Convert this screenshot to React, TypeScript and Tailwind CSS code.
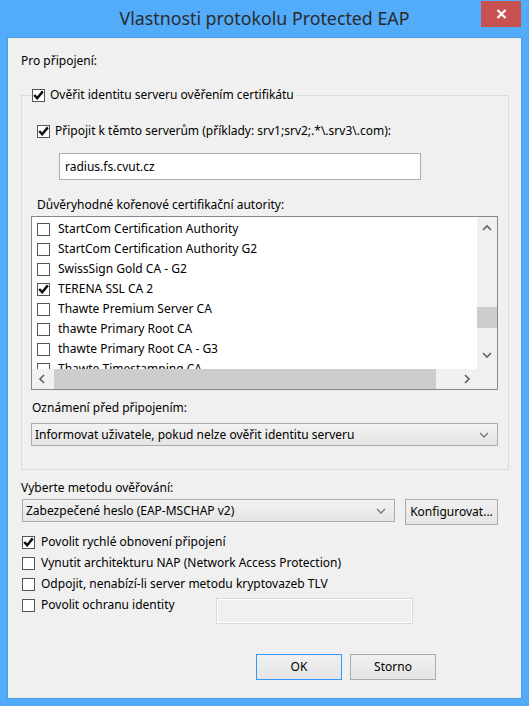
import React from "react";

const Check = () => (
  <svg width="11" height="10" viewBox="0 0 11 10" className="block">
    <path d="M1.2 5 L4.2 8.2 L9.8 1.4" fill="none" stroke="#111" strokeWidth="2.5" />
  </svg>
);

const CheckBox = ({ checked }: { checked?: boolean }) => (
  <span className="flex h-[13px] w-[13px] shrink-0 items-center justify-center border border-[#555] bg-white">
    {checked && <Check />}
  </span>
);

const Chevron = ({ dir }: { dir: "up" | "down" | "left" | "right" }) => {
  const d = {
    up: "M1 6 L5 2 L9 6",
    down: "M1 2 L5 6 L9 2",
    left: "M6 1 L2 5 L6 9",
    right: "M2 1 L6 5 L2 9",
  }[dir];
  const horiz = dir === "left" || dir === "right";
  return (
    <svg width={horiz ? 8 : 10} height={horiz ? 10 : 8} viewBox={horiz ? "0 0 8 10" : "0 0 10 8"}>
      <path d={d} fill="none" stroke="#606060" strokeWidth="1.6" />
    </svg>
  );
};

const certs = [
  { name: "StartCom Certification Authority" },
  { name: "StartCom Certification Authority G2" },
  { name: "SwissSign Gold CA - G2" },
  { name: "TERENA SSL CA 2", checked: true },
  { name: "Thawte Premium Server CA" },
  { name: "thawte Primary Root CA" },
  { name: "thawte Primary Root CA - G3" },
  { name: "Thawte Timestamping CA" },
];

const Combo = ({ text, className }: { text: string; className: string }) => (
  <div
    className={`flex h-[23px] items-center justify-between border border-[#acacac] bg-gradient-to-b from-[#f2f2f2] to-[#e5e5e5] pl-[3px] pr-[8px] ${className}`}
  >
    <span>{text}</span>
    <svg width="10" height="6" viewBox="0 0 10 6">
      <path d="M1 1 L5 5 L9 1" fill="none" stroke="#7a7a7a" strokeWidth="1.4" />
    </svg>
  </div>
);

const Button = ({ label, primary, className }: { label: string; primary?: boolean; className: string }) => (
  <div
    className={`flex items-center justify-center border bg-gradient-to-b from-[#f0f0f0] to-[#e5e5e5] ${
      primary ? "border-[#3399ff]" : "border-[#acacac]"
    } ${className}`}
  >
    {label}
  </div>
);

const Option = ({ label, checked }: { label: string; checked?: boolean }) => (
  <div className="flex h-[16px] items-center gap-[6px]">
    <CheckBox checked={checked} />
    <span>{label}</span>
  </div>
);

export default function App() {
  return (
    <div className="flex h-[706px] w-[529px] flex-col bg-[#52acfa] font-['Noto_Sans',sans-serif] text-[12px] leading-[16px] text-black">
      <div className="grid h-[37px] grid-cols-[1fr_auto_1fr]">
        <div />
        <div className="flex items-center pb-[1px] text-[17.8px] text-[#2b2b2b]">Vlastnosti protokolu Protected EAP</div>
        <div className="flex justify-end">
          <div className="mr-[8px] mt-[1px] flex h-[26px] w-[40px] items-center justify-center bg-[#c75050]">
            <svg width="11" height="10" viewBox="0 0 11 10">
              <path d="M1.5 1 L9.5 9 M9.5 1 L1.5 9" stroke="white" strokeWidth="2.2" />
            </svg>
          </div>
        </div>
      </div>

      <div className="mx-[7px] flex h-[662px] flex-col border border-[#4a9ee8] bg-[#f0f0f0]">
        <div className="ml-[13px] mt-[15px]">Pro připojení:</div>

        <fieldset className="ml-[13px] mt-[18px] w-[488px] border border-[#dcdcdc] pb-[23px]">
          <legend className="ml-[10px] pr-[2px]">
            <div className="flex h-[16px] items-center gap-[5px]">
              <CheckBox checked />
              <span>Ověřit identitu serveru ověřením certifikátu</span>
            </div>
          </legend>

          <div className="ml-[15px] mt-[20px] flex h-[16px] items-center gap-[5px]">
            <CheckBox checked />
            <span>Připojit k těmto serverům (příklady: srv1;srv2;.*\.srv3\.com):</span>
          </div>

          <div className="ml-[37px] mt-[14px] flex h-[27px] w-[362px] items-center border border-[#adadad] bg-white pl-[5px]">
            radius.fs.cvut.cz
          </div>

          <div className="ml-[15px] mt-[17px]">Důvěryhodné kořenové certifikační autority:</div>

          <div className="ml-[9px] mt-[3px] grid h-[174px] w-[467px] grid-cols-[1fr_20px] grid-rows-[1fr_20px] border border-[#828790] bg-white">
            <div className="overflow-hidden pl-[5px] pt-[2px]">
              {certs.map((c) => (
                <div key={c.name} className="flex h-[20px] items-center gap-[8px]">
                  <CheckBox checked={c.checked} />
                  <span>{c.name}</span>
                </div>
              ))}
            </div>
            <div className="flex flex-col bg-[#f0f0f0]">
              <div className="flex h-[22px] items-center justify-center">
                <Chevron dir="up" />
              </div>
              <div className="flex-1 pt-[68px]">
                <div className="h-[21px] w-full bg-[#cdcdcd]" />
              </div>
              <div className="flex h-[20px] items-center justify-center">
                <Chevron dir="down" />
              </div>
              <div className="h-[4px]" />
            </div>
            <div className="flex items-stretch bg-[#f0f0f0]">
              <div className="flex w-[20px] items-center justify-center">
                <Chevron dir="left" />
              </div>
              <div className="flex-1 pl-[2px]">
                <div className="h-full w-[382px] bg-[#cdcdcd]" />
              </div>
              <div className="flex w-[21px] items-center justify-center">
                <Chevron dir="right" />
              </div>
            </div>
            <div className="bg-[#f0f0f0]" />
          </div>

          <div className="ml-[10px] mt-[10px]">Oznámení před připojením:</div>
          <Combo className="ml-[9px] mt-[7px] w-[467px]" text="Informovat uživatele, pokud nelze ověřit identitu serveru" />
        </fieldset>

        <div className="ml-[13px] mt-[10px]">Vyberte metodu ověřování:</div>
        <div className="ml-[14px] mt-[3px] flex items-start gap-[10px]">
          <Combo className="w-[373px]" text="Zabezpečené heslo (EAP-MSCHAP v2)" />
          <Button className="h-[26px] w-[93px]" label="Konfigurovat..." />
        </div>

        <div className="ml-[14px] mt-[9px] flex flex-col gap-[5px]">
          <Option checked label="Povolit rychlé obnovení připojení" />
          <Option label="Vynutit architekturu NAP (Network Access Protection)" />
          <Option label="Odpojit, nenabízí-li server metodu kryptovazeb TLV" />
          <div className="flex items-start">
            <div className="w-[194px]">
              <Option label="Povolit ochranu identity" />
            </div>
            <div className="mt-[1px] h-[26px] w-[197px] border border-[#d9d9d9] bg-[#f0f0f0] shadow-[inset_0_0_0_1px_#ffffff]" />
          </div>
        </div>

        <div className="ml-[248px] mt-[30px] flex gap-[8px]">
          <Button primary className="h-[26px] w-[86px]" label="OK" />
          <Button className="h-[26px] w-[86px]" label="Storno" />
        </div>
      </div>
    </div>
  );
}
